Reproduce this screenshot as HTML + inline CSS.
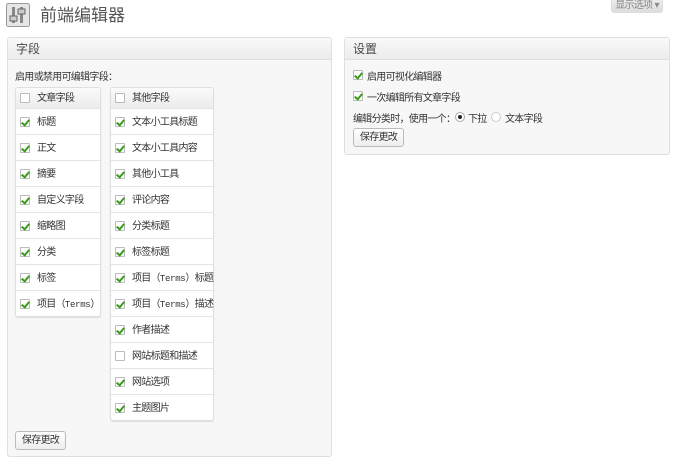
<!DOCTYPE html>
<html><head><meta charset="utf-8"><style>
*{box-sizing:border-box;margin:0;padding:0}
body{width:680px;height:464px;background:#fff;font-family:"Liberation Sans","Noto Sans CJK SC",sans-serif;font-size:10px;letter-spacing:-0.7px;color:#333;position:relative;overflow:hidden;white-space:nowrap}
.abs{position:absolute}
.panel{position:absolute;border:1px solid #dfdfdf;border-radius:3px;background:#f7f7f7}
.ph{height:22px;background:linear-gradient(#f9f9f9,#ececec);border-bottom:1px solid #dfdfdf;font-size:12px;letter-spacing:0;line-height:22px;padding-left:8px;color:#464646}
.cb{position:absolute;width:10px;height:10px;border:1px solid #bbb;background:#fff;border-radius:1px}
.cb.on::after{content:"";position:absolute;left:2px;top:0px;width:3px;height:6px;border:solid #3a9a1a;border-width:0 2px 2px 0;transform:rotate(40deg)}
.tbl{position:absolute;background:#fff;border:1px solid #dfdfdf;border-radius:3px;box-shadow:0 1px 1px #ddd}
.row{position:relative;height:26px;border-top:1px solid #e4e4e4;line-height:27px}
.row .cb{left:4px;top:8px}
.row span{position:absolute;left:21px}
.t{font-family:"Liberation Mono",monospace;font-size:9px;letter-spacing:-0.3px}
.hd{position:relative;height:20px;line-height:21px;background:linear-gradient(#fafafa,#ececec)}
.hd .cb{left:4px;top:5px}
.hd span{position:absolute;left:21px}
.btn{position:absolute;border:1px solid #bbb;border-radius:3px;background:linear-gradient(#fff,#eee);line-height:17px;text-align:center}
</style></head><body>
<svg class="abs" style="left:6px;top:3px" width="24" height="24" viewBox="0 0 24 24"><rect x="0.5" y="0.5" width="23" height="23" rx="2" fill="#e6e6e6" stroke="#999"/><rect x="6" y="4" width="3" height="16" fill="#888"/><rect x="14" y="4" width="3" height="16" fill="#888"/><rect x="4" y="13" width="7" height="5" fill="#ccc" stroke="#666"/><rect x="12" y="6" width="7" height="5" fill="#ccc" stroke="#666"/></svg>
<div class="abs" style="left:40px;top:4px;font-size:17px;letter-spacing:0;color:#555;line-height:24px">前端编辑器</div>
<div class="abs" style="left:611px;top:-3px;width:52px;height:16px;background:linear-gradient(#eee,#ddd);border-radius:0 0 3px 3px;font-size:10px;color:#888;line-height:16px;text-align:center;border:1px solid #ddd">显示选项 ▾</div>

<div class="panel" style="left:7px;top:37px;width:325px;height:420px">
<div class="ph">字段</div>
<div class="abs" style="left:7px;top:30px">启用或禁用可编辑字段：</div>
<div class="tbl" style="left:7px;top:49px;width:86px">
<div class="hd"><div class="cb"></div><span>文章字段</span></div>
<div class="row"><div class="cb on"></div><span>标题</span></div>
<div class="row"><div class="cb on"></div><span>正文</span></div>
<div class="row"><div class="cb on"></div><span>摘要</span></div>
<div class="row"><div class="cb on"></div><span>自定义字段</span></div>
<div class="row"><div class="cb on"></div><span>缩略图</span></div>
<div class="row"><div class="cb on"></div><span>分类</span></div>
<div class="row"><div class="cb on"></div><span>标签</span></div>
<div class="row"><div class="cb on"></div><span>项目（<b class="t" style="font-weight:normal">Terms</b>）</span></div>
</div>
<div class="tbl" style="left:102px;top:49px;width:104px">
<div class="hd"><div class="cb"></div><span>其他字段</span></div>
<div class="row"><div class="cb on"></div><span>文本小工具标题</span></div>
<div class="row"><div class="cb on"></div><span>文本小工具内容</span></div>
<div class="row"><div class="cb on"></div><span>其他小工具</span></div>
<div class="row"><div class="cb on"></div><span>评论内容</span></div>
<div class="row"><div class="cb on"></div><span>分类标题</span></div>
<div class="row"><div class="cb on"></div><span>标签标题</span></div>
<div class="row"><div class="cb on"></div><span>项目（<b class="t" style="font-weight:normal">Terms</b>）标题</span></div>
<div class="row"><div class="cb on"></div><span>项目（<b class="t" style="font-weight:normal">Terms</b>）描述</span></div>
<div class="row"><div class="cb on"></div><span>作者描述</span></div>
<div class="row"><div class="cb"></div><span>网站标题和描述</span></div>
<div class="row"><div class="cb on"></div><span>网站选项</span></div>
<div class="row"><div class="cb on"></div><span>主题图片</span></div>
</div>
<div class="btn" style="left:7px;top:393px;width:51px;height:19px">保存更改</div>
</div>

<div class="panel" style="left:344px;top:37px;width:326px;height:118px">
<div class="ph">设置</div>
<div class="cb on" style="left:8px;top:32px"></div><div class="abs" style="left:22px;top:30px">启用可视化编辑器</div>
<div class="cb on" style="left:8px;top:53px"></div><div class="abs" style="left:22px;top:51px">一次编辑所有文章字段</div>
<div class="abs" style="left:8px;top:72px">编辑分类时，使用一个：</div>
<div class="abs" style="left:110px;top:74px;width:10px;height:10px;border:1px solid #aaa;border-radius:50%;background:#fff"><div style="position:absolute;left:2px;top:2px;width:4px;height:4px;border-radius:50%;background:#222"></div></div>
<div class="abs" style="left:123px;top:72px">下拉</div>
<div class="abs" style="left:146px;top:74px;width:10px;height:10px;border:1px solid #ccc;border-radius:50%;background:#fff"></div>
<div class="abs" style="left:160px;top:72px">文本字段</div>
<div class="btn" style="left:8px;top:90px;width:51px;height:19px">保存更改</div>
</div>
</body></html>
